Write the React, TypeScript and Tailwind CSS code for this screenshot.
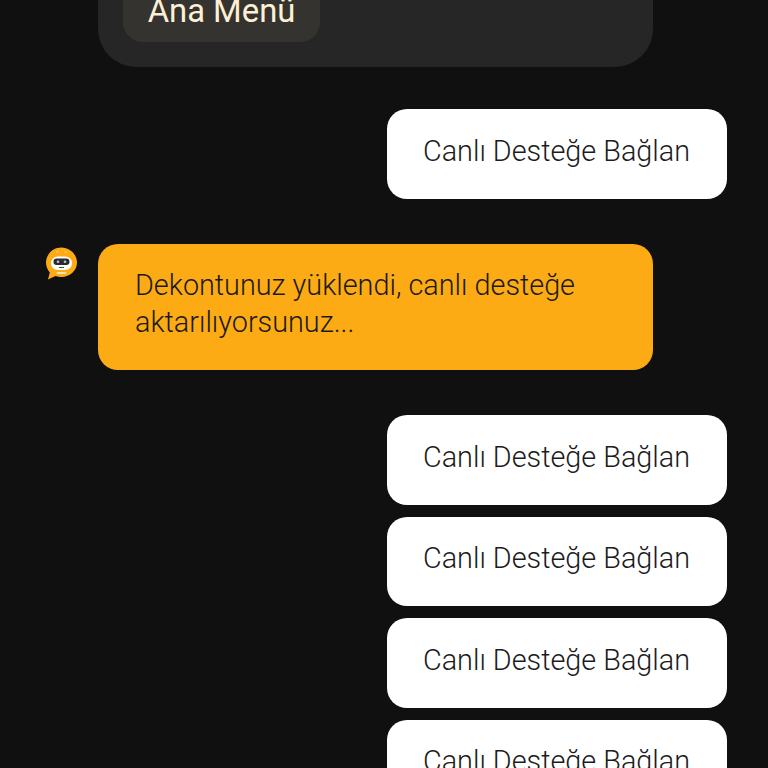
function Avatar() {
  return (
    <svg width="33" height="34" viewBox="0 0 33 34" className="absolute left-[45px] top-[2px]">
      <path d="M16.500 1.500C8 1.500 1 8.300 1 16.500c0 3.800 1.400 7.200 3.800 9.900L3 33.500l7.500-3.600c1.900.7 3.900 1.100 6 1.100C25 31 32 24.500 32 16.500S25 1.500 16.500 1.500Z" fill="#fcab14" />
      <rect x="6" y="10.500" width="21" height="13.500" rx="6.700" fill="#fff" />
      <rect x="8.500" y="12.500" width="16" height="6.500" rx="3.200" fill="#2a2a32" />
      <circle cx="13" cy="15.700" r="1.300" fill="#b9c4d4" />
      <circle cx="20" cy="15.700" r="1.300" fill="#b9c4d4" />
      <path d="M14.500 21.500h4" stroke="#444" strokeWidth="1.200" strokeLinecap="round" />
      <path d="M12.500 27h8" stroke="#ffe3a8" strokeWidth="2" strokeLinecap="round" />
      <path d="M11.500 6h1.500M20 6h1.500" stroke="#ffd98a" strokeWidth="1.200" strokeLinecap="round" />
    </svg>
  );
}

function UserBubble({ className = "" }: { className?: string }) {
  return (
    <div className={`self-end mr-[41px] w-[340px] h-[89.5px] shrink-0 rounded-[20px] bg-white flex items-center justify-center pb-[5px] pr-[1px] text-[28.800px] font-light text-[#1c1c1c] ${className}`}>
      Canlı Desteğe Bağlan
    </div>
  );
}

export default function App() {
  return (
    <div
      className="w-[768px] h-[768px] overflow-hidden bg-[#101010] flex flex-col"
      style={{ fontFamily: "Roboto, 'Noto Sans', sans-serif" }}
    >
      <div className="ml-[98px] w-[555px] h-[167px] -mt-[100px] shrink-0 rounded-b-[38px] bg-[#262626] flex items-end pb-[25px] pl-[25px]">
        <div className="w-[197px] h-[60px] rounded-[20px] bg-[#35332f] flex items-center justify-center pb-[1px] text-[32.800px] text-[#fdf0d5]">
          Ana Menü
        </div>
      </div>

      <UserBubble className="mt-[42px]" />

      <div className="relative mt-[45.5px] shrink-0">
        <Avatar />
        <div className="ml-[98px] w-[555px] h-[126px] rounded-[20px] bg-[#fcab14] pl-[37px] pr-[30px] pt-[23px] text-[28.800px] leading-[37px] text-[#1c1a14] [font-weight:350]">
          Dekontunuz yüklendi, canlı desteğe aktarılıyorsunuz...
        </div>
      </div>

      <UserBubble className="mt-[45px]" />
      <UserBubble className="mt-[12px]" />
      <UserBubble className="mt-[12px]" />
      <UserBubble className="mt-[12px]" />
    </div>
  );
}
